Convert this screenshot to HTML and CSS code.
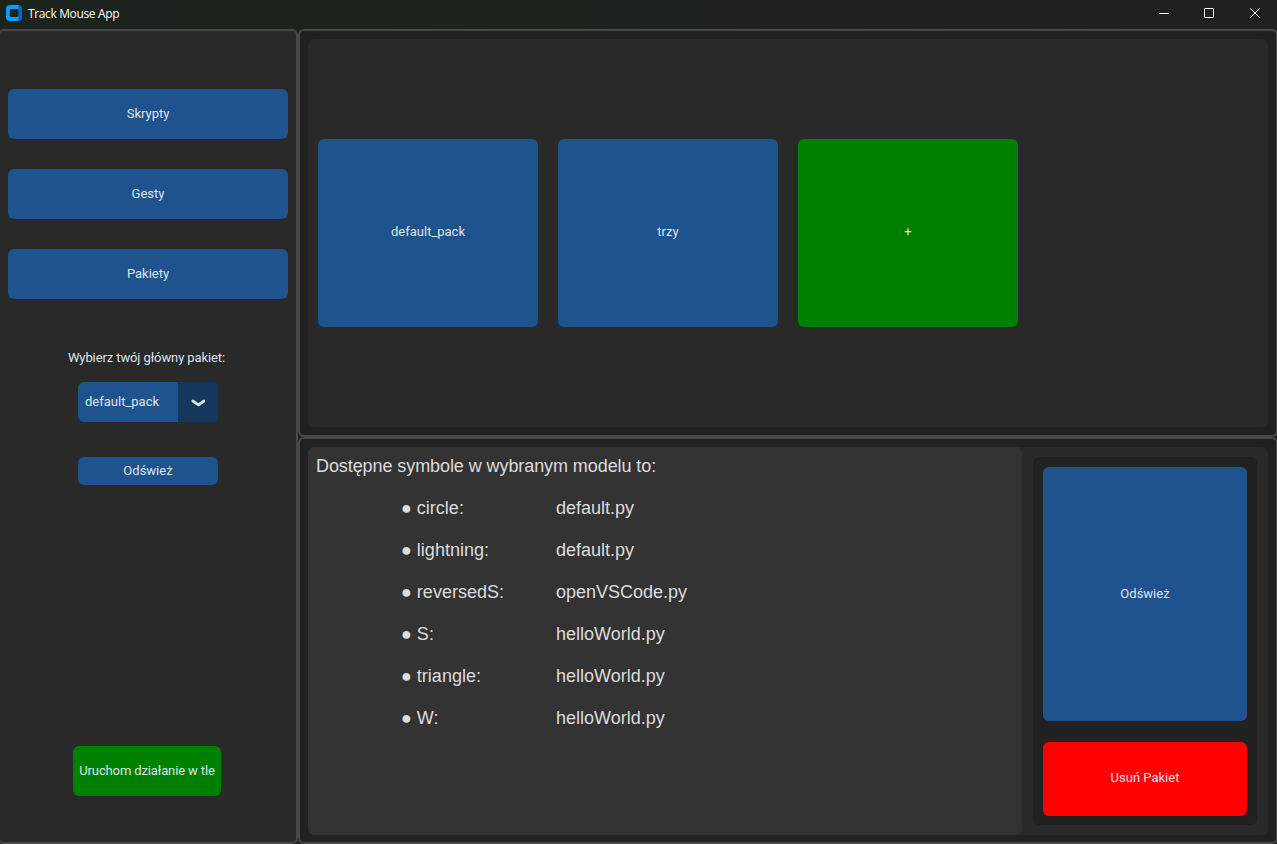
FILE: index.html
```html
<!DOCTYPE html>
<html lang="pl">
<head>
<meta charset="utf-8">
<title>Track Mouse App</title>
<link rel="stylesheet" href="styles.css">
</head>
<body>
<header class="titlebar">
  <svg class="logo" width="16" height="16" viewBox="0 0 16 16"><rect x="4" width="12" height="16" rx="3.500" fill="#0067b8"/><path d="M4 0H11.500Q13 0 12.500 2V14Q13 16 11.500 16H4Q0 16 0 12V4Q0 0 4 0Z" fill="#0a9bff"/><path d="M12 4H13V12H12Z" fill="#0067b8"/><rect x="3.800" y="4" width="8.400" height="8" rx="1.400" fill="#1c231c"/></svg>
  <span class="title">Track Mouse App</span>
  <svg class="controls" width="137" height="29" viewBox="0 0 137 29" fill="none" stroke="#fff"><path d="M19 13.5h10"/><rect x="64.500" y="8.500" width="9" height="9" rx="0.300"/><path d="M110.300 8.300l9.400 9.400M119.700 8.300l-9.400 9.400"/></svg>
</header>
<main class="layout">
  <aside class="frame sidebar">
    <nav class="nav">
      <button class="btn nav-btn">Skrypty</button>
      <button class="btn nav-btn">Gesty</button>
      <button class="btn nav-btn">Pakiety</button>
    </nav>
    <div class="label">Wybierz twój główny pakiet:</div>
    <div class="select">
      <span class="select-value">default_pack</span>
      <span class="select-arrow"><svg width="14" height="8" viewBox="0 0 14 8" fill="none" stroke="#dce4ee" stroke-width="2.800" stroke-linecap="round" stroke-linejoin="round"><path d="M1.800 2L7.500 5.800L13 2"/></svg></span>
    </div>
    <button class="btn refresh-small">Odśwież</button>
    <button class="btn green run">Uruchom działanie w tle</button>
  </aside>
  <section class="frame packs">
    <div class="panel pack-list">
      <button class="btn tile">default_pack</button>
      <button class="btn tile">trzy</button>
      <button class="btn tile green">+</button>
    </div>
  </section>
  <section class="frame details">
    <div class="panel detail-panel">
      <div class="textbox">
        <div class="line heading">Dostępne symbole w wybranym modelu to:</div>
        <div class="line item"><span class="name">● circle:</span><span>default.py</span></div>
        <div class="line item"><span class="name">● lightning:</span><span>default.py</span></div>
        <div class="line item"><span class="name">● reversedS:</span><span>openVSCode.py</span></div>
        <div class="line item"><span class="name">● S:</span><span>helloWorld.py</span></div>
        <div class="line item"><span class="name">● triangle:</span><span>helloWorld.py</span></div>
        <div class="line item"><span class="name">● W:</span><span>helloWorld.py</span></div>
      </div>
      <div class="actions">
        <button class="btn refresh-big">Odśwież</button>
        <button class="btn red">Usuń Pakiet</button>
      </div>
    </div>
  </section>
</main>
</body>
</html>
```
FILE: styles.css
```css
* { box-sizing: border-box; }
body {
  margin: 0;
  width: 1277px;
  height: 844px;
  overflow: hidden;
  background: #212121;
  color: #dce4ee;
  font: 13px/16px Roboto, sans-serif;
}
.titlebar {
  height: 29px;
  display: flex;
  align-items: flex-start;
  background: linear-gradient(90deg, #1c221c 0%, #1c241b 35%, #202020 90%);
}
.logo { margin: 5px 0 0 6px; }
.title {
  margin: 6px 0 0 6px;
  font: 12px/16px "Open Sans", sans-serif;
  letter-spacing: -0.36px;
  color: #fff;
}
.controls { margin-left: auto; }
.layout {
  display: grid;
  grid-template-columns: 300px 980px;
  grid-template-rows: 408px 407px;
  width: 1280px;
  margin-left: -2px;
}
.frame {
  border: 2px solid #484848;
  border-radius: 6px;
  background: #212121;
}
.sidebar {
  grid-row: 1 / 3;
  background: #292929;
  display: flex;
  flex-direction: column;
  align-items: center;
  padding: 58px 8px 46px;
}
.btn {
  display: block;
  flex-shrink: 0;
  border: 0;
  padding: 0 0 1px;
  border-radius: 6px;
  background: #1f538d;
  color: #dce4ee;
  font: 13px/16px Roboto, sans-serif;
}
.nav {
  display: flex;
  flex-direction: column;
  gap: 30px;
}
.nav-btn { width: 280px; height: 50px; }
.label {
  margin: 51px 3px 0 0;
  letter-spacing: -0.1px;
  color: #dce4ee;
}
.select {
  display: flex;
  width: 140px;
  height: 40px;
  margin-top: 16px;
  border-radius: 6px;
  overflow: hidden;
  background: #1f538d;
}
.select-value { width: 100px; padding: 12px 0 0 7px; }
.select-arrow {
  width: 40px;
  padding-top: 2px;
  background: #14375e;
  display: flex;
  align-items: center;
  justify-content: center;
}
.refresh-small { width: 140px; height: 28px; margin-top: 35px; }
.run {
  width: 148px;
  height: 50px;
  margin: auto 2px 0 0;
  letter-spacing: -0.13px;
}
.packs, .details { padding: 8px; }
.panel {
  width: 960px;
  height: 388px;
  border-radius: 6px;
  background: #292929;
}
.pack-list {
  display: flex;
  align-items: center;
  gap: 20px;
  padding: 0 10px;
}
.tile { width: 220px; height: 188px; padding-bottom: 3px; }
.green { background: #008000; }
.detail-panel { display: flex; gap: 11px; }
.textbox {
  width: 714px;
  height: 388px;
  padding: 9px 8px;
  border-radius: 6px;
  background: #333;
  color: #dcdcdc;
  font: 18px/21px "Liberation Sans", Arial, sans-serif;
}
.line { height: 21px; white-space: nowrap; }
.heading { letter-spacing: -0.08px; }
.item { display: flex; margin-top: 21px; padding-left: 85px; }
.name { width: 155px; }
.actions {
  width: 224px;
  height: 368px;
  margin-top: 10px;
  padding: 10px;
  display: flex;
  flex-direction: column;
  gap: 21px;
  border-radius: 6px;
  background: #212121;
}
.refresh-big { height: 254px; }
.red { height: 74px; padding-bottom: 3px; background: #f00; }
```
